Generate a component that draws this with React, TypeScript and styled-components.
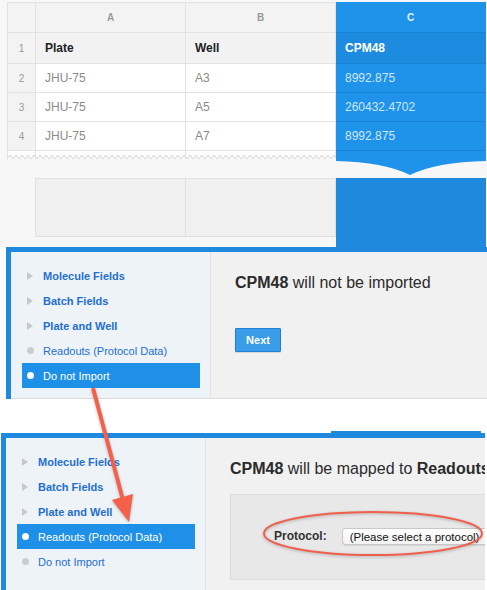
import React from "react";
import styled, { createGlobalStyle } from "styled-components";

const Global = createGlobalStyle`
  html, body { margin: 0; padding: 0; background: #fff; }
  body { font-family: "Liberation Sans", Arial, Helvetica, sans-serif; }
  * { box-sizing: border-box; }
`;

const BLUE = "#1e89dd";

const Page = styled.div`
  position: relative;
  width: 487px;
  height: 590px;
  overflow: hidden;
  background: #fff;
`;

/* ---------- spreadsheet ---------- */
const SheetArea = styled.section`
  background: #f7f7f7;
  height: 247px;
  padding: 2px 0 0 7px;
`;

const Grid = styled.div`
  display: grid;
  grid-template-columns: 29px 150px 150px 150px;
  align-items: start;
`;

const Corner = styled.div`
  height: 31px;
  background: #f3f3f3;
  border: 1px solid #e2e2e2;
`;

const ColHead = styled.div<{ $sel?: boolean }>`
  height: 31px;
  display: flex;
  align-items: center;
  justify-content: center;
  font-size: 10px;
  font-weight: 700;
  color: ${p => (p.$sel ? "#e4f1fd" : "#9a9a9a")};
  background: ${p => (p.$sel ? "#1f93e9" : "#f3f3f3")};
  border-top: 1px solid ${p => (p.$sel ? "#1f93e9" : "#e2e2e2")};
  border-bottom: 1px solid ${p => (p.$sel ? "#1a83d4" : "#e2e2e2")};
  border-right: 1px solid ${p => (p.$sel ? "#1f93e9" : "#e2e2e2")};
`;

const RowNum = styled.div<{ $h: number }>`
  height: ${p => p.$h}px;
  display: flex;
  align-items: center;
  justify-content: center;
  font-size: 10px;
  color: #9a9a9a;
  background: #f3f3f3;
  border-left: 1px solid #e2e2e2;
  border-right: 1px solid #e2e2e2;
  border-bottom: 1px solid #e2e2e2;
`;

const BodyCell = styled.div<{ $h: number; $title?: boolean }>`
  height: ${p => p.$h}px;
  display: flex;
  align-items: center;
  padding-left: 9px;
  font-size: 12px;
  font-weight: ${p => (p.$title ? 700 : 400)};
  color: ${p => (p.$title ? "#222" : "#8a8a8a")};
  background: ${p => (p.$title ? "#f2f2f2" : "#fff")};
  border-right: 1px solid #e2e2e2;
  border-bottom: 1px solid #e2e2e2;
  white-space: nowrap;
`;

const SelCell = styled.div<{ $h: number; $title?: boolean }>`
  height: ${p => p.$h}px;
  display: flex;
  align-items: center;
  padding-left: 9px;
  font-size: 12px;
  font-weight: ${p => (p.$title ? 700 : 400)};
  color: ${p => (p.$title ? "#fff" : "#cfe6fb")};
  background: ${p => (p.$title ? "#1d8bdf" : "#1f93e9")};
  border-bottom: 1px solid #1a83d4;
  white-space: nowrap;
`;

const Torn = styled.svg`
  grid-column: 1 / 4;
  display: block;
`;

const Brace = styled.svg`
  display: block;
`;

const Spacer = styled.div``;

const BlankCell = styled.div<{ $first?: boolean }>`
  height: 59px;
  background: #f0f0f0;
  border: 1px solid #e0e0e0;
  border-left: ${p => (p.$first ? "1px solid #e0e0e0" : "none")};
  margin-left: ${p => (p.$first ? -1 : 0)}px;
`;

const BlankSel = styled.div`
  height: 69px;
  background: ${BLUE};
`;

/* ---------- import panels ---------- */
const Panel = styled.section<{ $left: number; $right: number; $h: number }>`
  display: flex;
  height: ${p => p.$h}px;
  margin: 0 ${p => p.$right}px 0 ${p => p.$left}px;
  border-top: 5px solid ${BLUE};
  border-left: 5px solid ${BLUE};
`;

const Nav = styled.nav<{ $bottomLine?: boolean }>`
  flex: none;
  width: 200px;
  padding: 11px 10px 0 11px;
  background: #eef3f8;
  border-right: 1px solid #dfe3e8;
  border-bottom: ${p => (p.$bottomLine ? "1px solid #dcdcdc" : "none")};
`;

const NavItem = styled.div<{ $active?: boolean; $strong?: boolean }>`
  height: 25px;
  display: flex;
  align-items: center;
  gap: 9px;
  padding-left: 5px;
  font-size: 11px;
  font-weight: ${p => (p.$strong ? 700 : 400)};
  color: ${p => (p.$active ? "#fff" : "#1f6fcf")};
  background: ${p => (p.$active ? "#1f90e7" : "transparent")};
  white-space: nowrap;
`;

const Marker = styled.span<{ $kind: "tri" | "dot"; $active?: boolean }>`
  flex: none;
  width: 7px;
  height: 8px;
  display: flex;
  align-items: center;
  &::before {
    content: "";
    display: block;
    ${p =>
      p.$kind === "tri"
        ? `width:0;height:0;border-left:6px solid #c8c8c8;border-top:4px solid transparent;border-bottom:4px solid transparent;`
        : `width:7px;height:7px;border-radius:50%;background:${p.$active ? "#fff" : "#cdcdcd"};`}
  }
`;

const Main = styled.div<{ $bottomLine?: boolean }>`
  flex: 1;
  min-width: 0;
  overflow: hidden;
  background: #f1f1f1;
  padding: 21px 0 0 24px;
  border-bottom: ${p => (p.$bottomLine ? "1px solid #dcdcdc" : "none")};
`;

const Title = styled.div`
  font-size: 16px;
  line-height: 20px;
  color: #2b2b2b;
  white-space: nowrap;
  b { font-weight: 700; }
`;

const Button = styled.button`
  margin-top: 35px;
  width: 46px;
  height: 24px;
  padding: 0;
  border: 1px solid #1f7fd4;
  border-radius: 1px;
  background: #3b9ce8;
  color: #fff;
  font-family: inherit;
  font-size: 11px;
  font-weight: 700;
  box-shadow: 0 1px 1px rgba(0, 0, 0, 0.12);
`;

const MapBox = styled.div`
  margin-top: 15px;
  height: 86px;
  background: #e8e8e8;
  border: 1px solid #dcdcdc;
  border-right: none;
  padding: 33px 0 0 43px;
  display: flex;
  align-items: flex-start;
  gap: 15px;
`;

const Label = styled.span`
  font-size: 12px;
  font-weight: 700;
  color: #333;
  line-height: 17px;
`;

const SelectBox = styled.div`
  flex: 1;
  height: 17px;
  display: flex;
  align-items: center;
  padding-left: 7px;
  border: 1px solid #c8c8c8;
  border-right: none;
  border-radius: 4px 0 0 4px;
  background: linear-gradient(#ffffff, #f2f2f2);
  box-shadow: 0 1px 1px rgba(0, 0, 0, 0.08);
  font-size: 11.5px;
  color: #111;
  white-space: nowrap;
  overflow: hidden;
`;

const TabStrip = styled.div`
  margin: 32px 0 0 331px;
  width: 150px;
  height: 2px;
  background: ${BLUE};
`;

const Overlay = styled.svg`
  position: absolute;
  left: 0;
  top: 0;
  pointer-events: none;
  filter: drop-shadow(0 1px 1.5px rgba(0, 0, 0, 0.25));
`;

/* ---------- data ---------- */
const rows: { n: number; a: string; b: string; c: string; h: number; title?: boolean }[] = [
  { n: 1, a: "Plate", b: "Well", c: "CPM48", h: 31, title: true },
  { n: 2, a: "JHU-75", b: "A3", c: "8992.875", h: 29 },
  { n: 3, a: "JHU-75", b: "A5", c: "260432.4702", h: 29 },
  { n: 4, a: "JHU-75", b: "A7", c: "8992.875", h: 29 },
];

type Item = { label: string; kind: "tri" | "dot"; strong?: boolean };
const items: Item[] = [
  { label: "Molecule Fields", kind: "tri", strong: true },
  { label: "Batch Fields", kind: "tri", strong: true },
  { label: "Plate and Well", kind: "tri", strong: true },
  { label: "Readouts (Protocol Data)", kind: "dot" },
  { label: "Do not Import", kind: "dot" },
];

function zigzag(width: number) {
  const pts: string[] = [];
  for (let x = 0; x <= width; x += 6) {
    pts.push(`${x},8`);
    pts.push(`${x + 3},4`);
  }
  return pts.join(" ");
}

function NavList({ active }: { active: number }) {
  return (
    <>
      {items.map((it, i) => (
        <NavItem key={it.label} $active={i === active} $strong={it.strong}>
          <Marker $kind={it.kind} $active={i === active} />
          {it.label}
        </NavItem>
      ))}
    </>
  );
}

export default function App() {
  const zz = zigzag(330);
  return (
    <Page>
      <Global />
      <SheetArea>
        <Grid>
          <Corner />
          <ColHead>A</ColHead>
          <ColHead>B</ColHead>
          <ColHead $sel>C</ColHead>
          {rows.map(r => (
            <React.Fragment key={r.n}>
              <RowNum $h={r.h}>{r.n}</RowNum>
              <BodyCell $h={r.h} $title={r.title}>{r.a}</BodyCell>
              <BodyCell $h={r.h} $title={r.title}>{r.b}</BodyCell>
              <SelCell $h={r.h} $title={r.title}>{r.c}</SelCell>
            </React.Fragment>
          ))}
          <Torn width={329} height={27} viewBox="0 0 329 27">
            <polygon points={`0,0 329,0 ${zz.split(" ").reverse().join(" ")}`} fill="#fff" />
            <polygon points={`0,0 329,0 329,8 0,8`} fill="none" />
            <g stroke="#e2e2e2" strokeWidth="1">
              <line x1="0.5" y1="0" x2="0.5" y2="7" />
              <line x1="28.5" y1="0" x2="28.5" y2="7" />
              <line x1="178.5" y1="0" x2="178.5" y2="7" />
              <line x1="328.5" y1="0" x2="328.5" y2="7" />
            </g>
            <polyline points={zz} fill="none" stroke="#d6d6d6" strokeWidth="1" />
          </Torn>
          <Brace width={150} height={27} viewBox="0 0 150 27">
            <path d="M0 0 H150 V10 Q100 11 74 24 Q48 11 0 10 Z" fill="#1f93e9" />
          </Brace>
          <Spacer />
          <BlankCell $first />
          <BlankCell />
          <BlankSel />
        </Grid>
      </SheetArea>

      <Panel $left={6} $right={0} $h={152}>
        <Nav $bottomLine>
          <NavList active={4} />
        </Nav>
        <Main $bottomLine>
          <Title>
            <b>CPM48</b> will not be imported
          </Title>
          <Button>Next</Button>
        </Main>
      </Panel>

      <TabStrip />

      <Panel $left={1} $right={2} $h={157}>
        <Nav>
          <NavList active={3} />
        </Nav>
        <Main>
          <Title>
            <b>CPM48</b> will be mapped to <b>Readouts (Protocol Data)</b>
          </Title>
          <MapBox>
            <Label>Protocol:</Label>
            <SelectBox>(Please select a protocol)</SelectBox>
          </MapBox>
        </Main>
      </Panel>

      <Overlay width={487} height={590} viewBox="0 0 487 590">
        <ellipse cx="373" cy="533.5" rx="109" ry="21.5" fill="none" stroke="#ef5f4b" strokeWidth="2" />
        <line x1="93" y1="388" x2="123" y2="500" stroke="#f4604a" strokeWidth="4" />
        <polygon points="129,522 133,494 112,500" fill="#f4604a" />
      </Overlay>
    </Page>
  );
}
